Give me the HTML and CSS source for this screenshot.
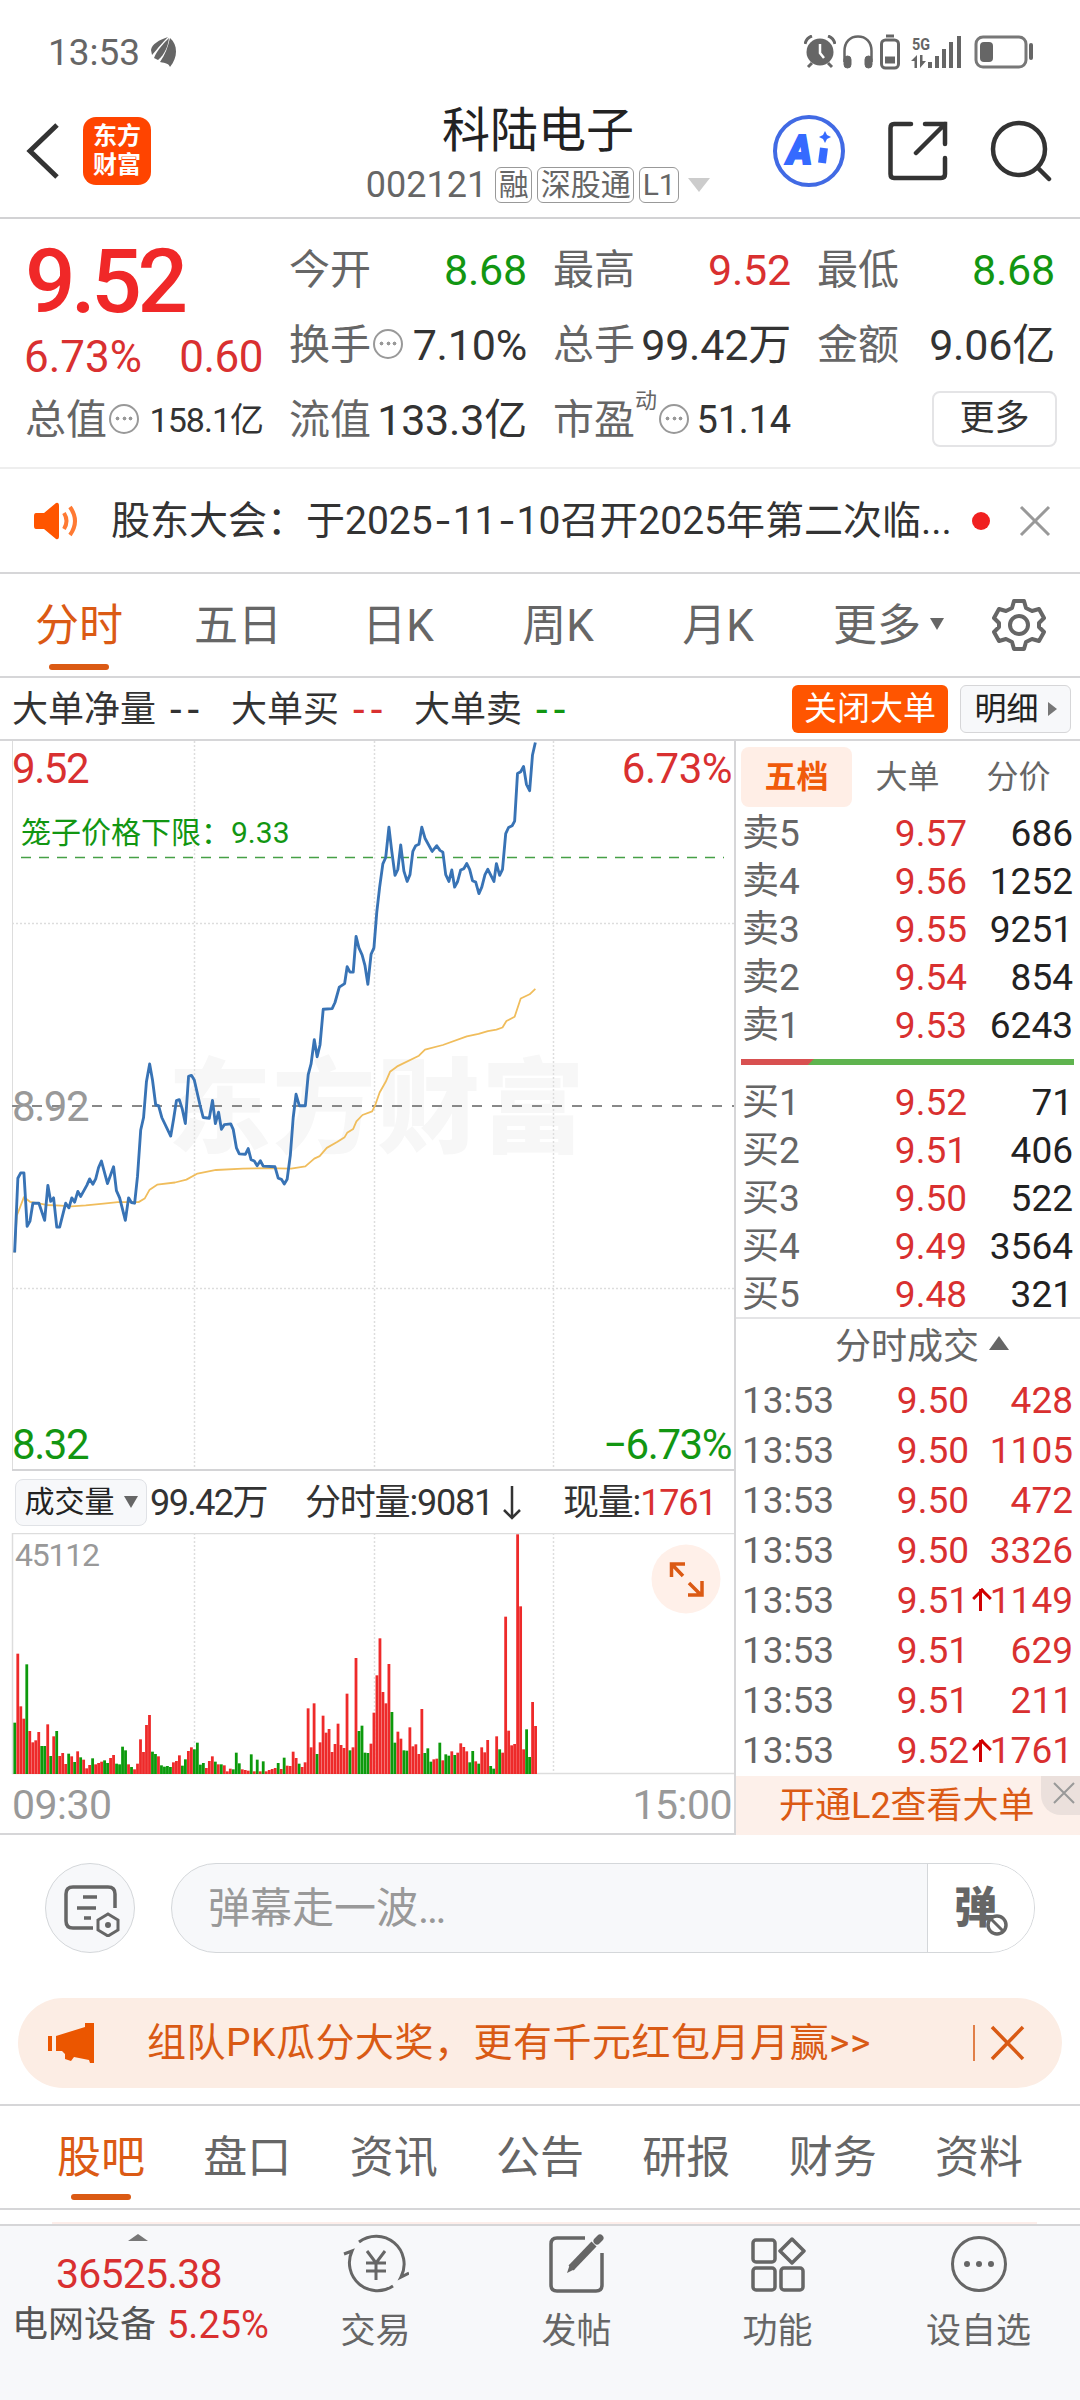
FILE: index.html
```
<!DOCTYPE html>
<html lang="zh-CN">
<head>
    <meta charset="UTF-8">
    <meta name="viewport" content="width=device-width, initial-scale=1.0">
    <title>科陆电子 002121</title>
    <link rel="stylesheet" href="styles.css">
</head>
<body>
    <div class="status-bar">
        <span class="time">13:53</span>
        <svg class="leaf" width="26" height="30" viewBox="0 0 26 30" fill="#666"><path d="M0 13C1 7 8 3 17 0C11 6 8 10 1 18Z"/><path d="M3 21C6 13 13 6 18 1C17 9 14 17 7 23Z"/><path d="M9 25C14 18 17 10 19 1C27 8 27 20 19 30C18 27 15 26 9 25Z"/></svg>
        <div class="status-icons">
            <svg width="32" height="34" viewBox="0 0 32 34" fill="none" stroke="#666"><circle cx="16" cy="17" r="13.5" fill="#666" stroke="none"/><path d="M1 9C2 4 5 2 8 1M31 9C30 4 27 2 24 1M8 28L4 32M24 28L28 32" stroke-width="3"/><path d="M16 9V18L20 23" stroke="#fff" stroke-width="2.5"/></svg>
            <svg width="32" height="36" viewBox="0 0 32 36" fill="none" stroke="#666"><path d="M2.500 28V17C2.500 8 8 2.500 16 2.500S29.500 8 29.500 17V28" stroke-width="2.500"/><rect x="2" y="22" width="7" height="12" rx="3.500" fill="#666"/><rect x="23" y="22" width="7" height="12" rx="3.500" fill="#666"/></svg>
            <svg width="20" height="36" viewBox="0 0 20 36" fill="none" stroke="#666"><rect x="1.500" y="6" width="17" height="28" rx="4" stroke-width="3"/><path d="M6 2H14" stroke-width="3"/><path d="M5 26H15" stroke-width="7"/></svg>
            <svg class="signal" width="52" height="34" viewBox="0 0 52 34" fill="#666"><text x="1" y="15" font-size="17" font-weight="700" textLength="18" lengthAdjust="spacingAndGlyphs">5G</text><path d="M6 20V33H3.500V26H0ZM9 20V33L15 26L11.500 26V20Z"/><path d="M17 27h4v6h-4zM24 21h4v12h-4zM31 14h4v19h-4zM38 7h4v26h-4zM46 1h4v32h-4z"/></svg>
            <svg width="60" height="34" viewBox="0 0 60 34"><rect x="2" y="2" width="50" height="30" rx="7" fill="none" stroke="#777" stroke-width="3"/><rect x="6" y="7" width="13" height="20" rx="4" fill="#666"/><rect x="55" y="8" width="4" height="17" rx="2" fill="#666"/></svg>
        </div>
    </div>

    <div class="header">
        <svg class="back" width="34" height="58" viewBox="0 0 34 58" fill="none" stroke="#333" stroke-width="5"><path d="M32 3L5 29L32 55"/></svg>
        <div class="logo"><span>东方</span><span>财富</span></div>
        <div class="title">
            <div class="stock-name">科陆电子</div>
            <div class="stock-code"><span>002121</span><i>融</i><i>深股通</i><i>L1</i><b class="tri-down big"></b></div>
        </div>
        <div class="header-icons">
            <svg width="74" height="74" viewBox="0 0 74 74"><circle cx="37" cy="37" r="34" fill="#fff" stroke="#416ae4" stroke-width="4"/><text x="15" y="50" font-size="40" font-weight="900" font-style="italic" fill="#356aff" stroke="#356aff" stroke-width="2" textLength="25" lengthAdjust="spacingAndGlyphs">A</text><path d="M52 34L50 49" stroke="#356aff" stroke-width="8"/><path d="M53 17L55 21L59 23L55 25L53 29L51 25L47 23L51 21Z" fill="#356aff"/></svg>
            <svg width="60" height="60" viewBox="0 0 60 60" fill="none" stroke="#333" stroke-width="4.500" stroke-linecap="round"><path d="M23 3H6Q2.500 3 2.500 7V53Q2.500 57 6 57H53Q57 57 57 53V37M37 3H57V23M57 3L28 32"/></svg>
            <svg width="62" height="62" viewBox="0 0 62 62" fill="none" stroke="#333" stroke-width="4.500" stroke-linecap="round"><circle cx="29" cy="29" r="26"/><path d="M48 48L59 59"/></svg>
        </div>
    </div>

    <div class="quote">
        <div class="price-box">
            <div class="price">9.52</div>
            <div class="change"><span>6.73%</span><span>0.60</span></div>
        </div>
        <div class="item"><label>今开</label><span class="green">8.68</span></div>
        <div class="item"><label>最高</label><span class="red">9.52</span></div>
        <div class="item"><label>最低</label><span class="green">8.68</span></div>
        <div class="item"><label>换手</label><em class="dots"></em><span>7.10%</span></div>
        <div class="item"><label>总手</label><span>99.42万</span></div>
        <div class="item"><label>金额</label><span>9.06亿</span></div>
        <div class="item"><label>总值</label><em class="dots"></em><span class="small">158.1亿</span></div>
        <div class="item"><label>流值</label><span>133.3亿</span></div>
        <div class="item"><label>市盈</label><sup>动</sup><em class="dots"></em><span class="mid">51.14</span></div>
        <div class="item"><button class="more-btn">更多</button></div>
    </div>

    <div class="notice">
        <svg width="46" height="38" viewBox="0 0 46 38"><path d="M3 11H11L23 1Q26 0 26 4V34Q26 38 23 37L11 27H3Q1 27 1 24V14Q1 11 3 11Z" fill="#ff5500"/><path d="M31 11Q36 19 31 27M37 5Q47 19 37 33" fill="none" stroke="#ff7a33" stroke-width="4"/></svg>
        <span class="notice-text">股东大会：于2025<u>-</u>11<u>-</u>10召开2025年第二次临...</span>
        <span class="red-dot"></span>
        <svg width="32" height="32" viewBox="0 0 32 32" stroke="#999" stroke-width="3"><path d="M2 2L30 30M30 2L2 30"/></svg>
    </div>

    <div class="period-tabs">
        <span><em class="active">分时</em></span>
        <span>五日</span>
        <span>日K</span>
        <span>周K</span>
        <span>月K</span>
        <span class="has-more">更多<b class="tri-down"></b></span>
        <svg width="54" height="54" viewBox="0 0 54 54" fill="none" stroke="#666" stroke-width="4"><path d="M22 3H32L34 10L40 13L47 11L52 20L47 25V29L52 34L47 43L40 41L34 44L32 51H22L20 44L14 41L7 43L2 34L7 29V25L2 20L7 11L14 13L20 10Z" stroke-linejoin="round"/><circle cx="27" cy="27" r="9"/></svg>
    </div>

    <div class="big-order">
        <span>大单净量</span><span class="dash">--</span>
        <span>大单买</span><span class="dash red">--</span>
        <span>大单卖</span><span class="dash green">--</span>
        <button class="btn-close-order">关闭大单</button>
        <button class="btn-detail">明细<b class="tri-right"></b></button>
    </div>

    <div class="main">
        <div class="chart-col">
            <svg class="price-chart" width="734" height="730" viewBox="0 0 734 730">
                <text class="watermark" x="168" y="404">东方财富</text>
                <g class="grid">
                    <path d="M194.500 0V730M374.500 0V730M553.500 0V730M12 182.500H734M12 547.500H734"/>
                </g>
                <path d="M12.500 0V730" stroke="#ddd"/>
                <path d="M12 729H734" stroke="#d4d4d6" stroke-width="2"/>
                <path d="M12 365H734" stroke="#888" stroke-width="2" stroke-dasharray="10 10"/>
                <path d="M21 116.500H724" stroke="#46a046" stroke-width="1.500" stroke-dasharray="10 8"/>
                <text class="label red" x="12" y="42" textLength="77">9.52</text>
                <text class="label red" x="732" y="42" text-anchor="end">6.73%</text>
                <text class="label grey" x="12" y="380" textLength="77">8.92</text>
                <text class="label green" x="12" y="718" textLength="77">8.32</text>
                <text class="label green" x="603" y="718" textLength="129">−6.73%</text>
                <text class="cage green" x="21" y="102">笼子价格下限：9.33</text>
                <g transform="translate(0 -11) scale(.35714)" fill="none" stroke-linejoin="round">
                    <polyline stroke="#f0bd5c" stroke-width="5" points="41,1463 47,1360 67,1308 84,1321 105,1325 130,1330 170,1332 200,1334 240,1331 290,1326 330,1322 388,1322 405,1312 419,1287 440,1273 490,1267 522,1259 553,1242 605,1232 680,1228 740,1227 815,1228 855,1222 880,1200 895,1193 915,1170 945,1153 965,1140 972,1128 989,1117 998,1096 1015,1078 1042,1068 1050,1052 1063,1015 1080,985 1092,957 1112,942 1173,912 1190,895 1240,882 1307,858 1340,851 1366,843 1390,839 1407,833 1418,815 1441,803 1458,752 1483,740 1499,725"/>
                    <polyline stroke="#3873b5" stroke-width="8" points="41,1463 50,1255 58,1240 67,1240 76,1390 84,1375 92,1325 109,1325 125,1373 134,1275 142,1320 150,1310 159,1392 167,1392 184,1325 193,1338 201,1310 209,1322 218,1292 226,1306 243,1275 251,1257 260,1272 268,1257 276,1225 284,1207 301,1270 318,1223 326,1290 335,1310 351,1373 360,1310 368,1323 377,1325 385,1250 394,1120 402,1085 410,985 419,935 427,980 436,1050 444,1052 453,1085 478,1137 486,1090 494,1038 502,1035 510,1060 519,1102 528,970 536,967 544,980 560,1050 569,1085 586,1087 595,1037 603,1102 612,1070 620,1118 628,1105 646,1103 653,1118 662,1170 670,1187 687,1188 695,1172 703,1203 712,1207 720,1220 729,1206 737,1221 770,1223 779,1255 788,1258 796,1271 804,1258 813,1190 821,1085 829,1020 838,1052 855,1052 863,965 871,935 880,867 888,915 896,882 905,782 930,780 938,763 950,720 965,710 972,663 980,678 989,678 997,578 1005,610 1014,630 1022,660 1030,712 1039,628 1047,610 1055,510 1063,440 1072,375 1080,357 1089,272 1097,340 1106,407 1114,390 1122,322 1131,395 1140,424 1148,405 1156,340 1164,324 1173,320 1181,272 1190,303 1210,340 1223,324 1232,337 1240,342 1248,405 1257,424 1265,392 1273,440 1281,425 1290,392 1299,388 1307,374 1315,390 1323,422 1332,426 1341,458 1349,440 1358,405 1366,390 1383,424 1390,374 1399,407 1407,390 1416,290 1424,273 1434,268 1441,255 1449,122 1458,117 1466,102 1474,152 1483,170 1491,70 1499,35"/>
                </g>
            </svg>
            <div class="volume-bar">
                <button class="btn-volume">成交量<b class="tri-down"></b></button>
                <span class="v-total">99.42万</span>
                <span class="v-minute">分时量:9081<svg width="18" height="36" viewBox="0 0 18 36" fill="none" stroke="#333" stroke-width="2.500"><path d="M9 1V33M1 25L9 33L17 25"/></svg></span>
                <span class="v-now">现量:<span class="red">1761</span></span>
            </div>
            <svg class="volume-chart" width="734" height="242" viewBox="0 0 734 242">
                <path class="grid" d="M194.500 0V241M374.500 0V241M553.500 0V241"/>
                <path d="M734 .5H12.500V240.500H734" fill="none" stroke="#ddd" stroke-width="1.500"/>
                <text class="max" x="15" y="33" textLength="85">45112</text>
                <g id="bars"></g>
                <circle cx="686" cy="46" r="34.500" fill="#fff0e9"/>
                <path d="M671.500 44V31H685M673 32.500L683 43M689 50L701 62M702 48V62H688" fill="none" stroke="#db5a14" stroke-width="3.500"/>
            </svg>
            <div class="time-axis"><span>09:30</span><span>15:00</span></div>
        </div>

        <div class="side-col">
            <div class="side-tabs"><span class="active">五档</span><span>大单</span><span>分价</span></div>
            <div class="book">
                <div class="row"><span>卖5</span><b>9.57</b><i>686</i></div>
                <div class="row"><span>卖4</span><b>9.56</b><i>1252</i></div>
                <div class="row"><span>卖3</span><b>9.55</b><i>9251</i></div>
                <div class="row"><span>卖2</span><b>9.54</b><i>854</i></div>
                <div class="row"><span>卖1</span><b>9.53</b><i>6243</i></div>
            </div>
            <div class="ratio"></div>
            <div class="book">
                <div class="row"><span>买1</span><b>9.52</b><i>71</i></div>
                <div class="row"><span>买2</span><b>9.51</b><i>406</i></div>
                <div class="row"><span>买3</span><b>9.50</b><i>522</i></div>
                <div class="row"><span>买4</span><b>9.49</b><i>3564</i></div>
                <div class="row"><span>买5</span><b>9.48</b><i>321</i></div>
            </div>
            <div class="ticks-title">分时成交<b class="tri-up"></b></div>
            <div class="ticks">
                <div class="row"><span>13:53</span><b>9.50</b><i>428</i></div>
                <div class="row"><span>13:53</span><b>9.50</b><i>1105</i></div>
                <div class="row"><span>13:53</span><b>9.50</b><i>472</i></div>
                <div class="row"><span>13:53</span><b>9.50</b><i>3326</i></div>
                <div class="row up"><span>13:53</span><b>9.51</b><i>1149</i></div>
                <div class="row"><span>13:53</span><b>9.51</b><i>629</i></div>
                <div class="row"><span>13:53</span><b>9.51</b><i>211</i></div>
                <div class="row up"><span>13:53</span><b>9.52</b><i>1761</i></div>
            </div>
            <div class="l2-ad">开通L2查看大单
                <div class="l2-close"><svg width="22" height="22" viewBox="0 0 22 22" stroke="#999" stroke-width="2"><path d="M1 1L21 21M21 1L1 21"/></svg></div>
            </div>
        </div>
    </div>

    <div class="danmu">
        <div class="danmu-set">
            <svg width="56" height="52" viewBox="0 0 56 52" fill="none" stroke="#666" stroke-width="3.500"><path d="M29 43H9Q2 43 2 36V9Q2 2 9 2H44Q51 2 51 9V23M19 12H33M13 23H32M20 33H27"/><path d="M44 29L54 35V45L44 51L34 45V35Z" stroke-width="3"/><circle cx="44" cy="40" r="3" fill="#666" stroke="none"/></svg>
        </div>
        <div class="danmu-input">
            <span>弹幕走一波…</span>
            <div class="danmu-switch">弹
                <svg width="22" height="22" viewBox="0 0 22 22"><circle cx="11" cy="11" r="9" fill="#fff" stroke="#666" stroke-width="3.500"/><path d="M5 5L17 17" stroke="#666" stroke-width="3"/></svg>
            </div>
        </div>
    </div>

    <div class="promo">
        <svg width="46" height="40" viewBox="0 0 46 40" fill="#eb5600"><path d="M0 13h4v15H0zM8 13L37 4V0H46V40H42L41 37L26 34L23 38L17 36V31L14 28H8Z"/></svg>
        <span class="promo-text">组队PK瓜分大奖，更有千元红包月月赢&gt;&gt;</span>
        <svg class="promo-close" width="52" height="36" viewBox="0 0 52 36" fill="none" stroke="#d95a14"><path d="M1 0V36" stroke-width="1.500"/><path d="M19 2L50 34M50 2L19 34" stroke-width="3.500"/></svg>
    </div>

    <div class="info-tabs">
        <span class="active">股吧</span><span>盘口</span><span>资讯</span><span>公告</span><span>研报</span><span>财务</span><span>资料</span>
    </div>
    <div class="feed-peek"></div>

    <div class="bottom-nav">
        <div class="sector">
            <b class="tri-up"></b>
            <div class="sector-index">36525.38</div>
            <div class="sector-name">电网设备<span>5.25%</span></div>
        </div>
        <div class="nav-item">
            <svg width="66" height="60" viewBox="0 0 66 60" fill="none" stroke="#666" stroke-width="3"><path d="M16 8A28 28 0 0 1 58 43L66 39M50 52A28 28 0 0 1 9 17L1 20M24 17L33 29L42 17M33 29V46M23 29H43M23 37H43"/></svg>
            <span>交易</span>
        </div>
        <div class="nav-item">
            <svg width="56" height="60" viewBox="0 0 56 60" fill="none" stroke="#666" stroke-width="3.500"><path d="M36 4H8Q2 4 2 10V51Q2 57 8 57H47Q53 57 53 51V19"/><path d="M22 34L45 10" stroke-width="7"/><path d="M18 39L21 30L26 35Z" fill="#666" stroke="none"/><path d="M48 7L51 4" stroke-width="7" stroke-linecap="round"/></svg>
            <span>发帖</span>
        </div>
        <div class="nav-item">
            <svg width="56" height="60" viewBox="0 0 56 60" fill="none" stroke="#666" stroke-width="3.500"><rect x="3" y="6" width="22" height="22" rx="3"/><rect x="3" y="34" width="22" height="22" rx="3"/><rect x="31" y="34" width="22" height="22" rx="3"/><path d="M42 5L54 17L42 29L30 17Z" stroke-linejoin="round"/></svg>
            <span>功能</span>
        </div>
        <div class="nav-item">
            <svg width="60" height="60" viewBox="0 0 60 60"><circle cx="30" cy="30" r="26.500" fill="none" stroke="#666" stroke-width="3"/><g fill="#666"><circle cx="18" cy="30" r="3"/><circle cx="30" cy="30" r="3"/><circle cx="42" cy="30" r="3"/></g></svg>
            <span>设自选</span>
        </div>
    </div>

    <script src="chart.js"></script>
</body>
</html>
```
FILE: styles.css
```
* {
    box-sizing: border-box;
}

body {
    margin: 0;
    width: 1080px;
    height: 2400px;
    overflow: hidden;
    background: #fff;
    color: #333;
    font-family: Roboto, "Noto Sans CJK SC", sans-serif;
    line-height: 1;
    white-space: nowrap;
}

i, em {
    font-style: normal;
}

button {
    display: flex;
    align-items: center;
    justify-content: center;
    padding: 0;
    font-family: inherit;
    line-height: 1;
}

svg {
    display: block;
    flex: none;
}

.red { color: #d93030; fill: #d93030; }
.green { color: #129612; fill: #129612; }
.grey { fill: #999; }

/* small triangles */
.tri-down, .tri-up, .tri-right {
    display: inline-block;
    width: 0;
    height: 0;
    border: 7px solid transparent;
}
.tri-down { border-top: 12px solid #666; border-bottom: 0; }
.tri-down.big { border-width: 14px 11px 0; border-top-color: #ccc; }
.tri-up { border-bottom: 14px solid #666; border-top: 0; border-left-width: 10px; border-right-width: 10px; }
.tri-right { border-left: 9px solid #777; border-right: 0; }

/* status bar */
.status-bar {
    display: flex;
    align-items: center;
    height: 104px;
    padding: 0 46px 0 48px;
    color: #666;
}
.time { font-size: 37px; }
.leaf { margin-left: 11px; }
.status-icons {
    display: flex;
    align-items: center;
    gap: 6px;
    margin-left: auto;
}
.signal { margin-left: 5px; margin-right: 5px; }

/* header */
.header {
    display: flex;
    align-items: center;
    height: 115px;
    padding: 0 28px 20px 25px;
    border-bottom: 2px solid #d2d2d4;
}
.logo {
    display: flex;
    flex-direction: column;
    justify-content: center;
    align-items: center;
    width: 68px;
    height: 68px;
    margin-left: 24px;
    border-radius: 13px;
    background: #ff4400;
    color: #fff;
    font-size: 24px;
    font-weight: 700;
    line-height: 29px;
}
.title {
    display: flex;
    flex-direction: column;
    align-items: center;
    width: 360px;
    margin-left: 207px;
    padding-top: 5px;
}
.stock-name {
    font-size: 48px;
    line-height: 56px;
    color: #222;
}
.stock-code {
    display: flex;
    align-items: center;
    gap: 5px;
    height: 38px;
    margin-top: 7px;
    font-size: 36px;
    color: #666;
}
.stock-code i {
    height: 36px;
    padding: 0 2.500px;
    border: 1.500px solid #999;
    border-radius: 6px;
    font-size: 30px;
    line-height: 33px;
}
.stock-code span { margin-right: 3px; }
.stock-code .big { margin-left: 4px; }
.header-icons {
    display: flex;
    align-items: center;
    gap: 42px;
    margin-left: auto;
}

/* quote */
.quote {
    display: grid;
    grid-template-columns: repeat(4, 1fr);
    grid-template-rows: repeat(3, 75px);
    column-gap: 26px;
    height: 250px;
    padding: 13px 25px 0;
    border-bottom: 2px solid #eee;
}
.price-box { grid-row: span 2; }
.price {
    height: 98px;
    font-size: 89px;
    font-weight: 500;
    line-height: 100px;
    letter-spacing: -4.500px;
    color: #f02828;
}
.change {
    display: flex;
    justify-content: space-between;
    margin-left: -1px;
    font-size: 44px;
    line-height: 54px;
    color: #d93030;
}
.change span + span { letter-spacing: -.500px; }
.item {
    display: flex;
    align-items: center;
    font-size: 43px;
}
.item label {
    margin-top: 2px;
    font-size: 41px;
    color: #666;
}
.item > span {
    margin-top: 1px;
    margin-left: auto;
    letter-spacing: -.200px;
}
.item .small { font-size: 34px; letter-spacing: -1px; }
.item .mid { font-size: 38px; }
.item sup {
    align-self: flex-start;
    margin-top: 8px;
    font-size: 22px;
    color: #666;
}
.dots {
    width: 30px;
    height: 30px;
    margin-left: 2px;
    margin-top: -2px;
    border: 2.500px solid #999;
    border-radius: 50%;
    background: radial-gradient(circle, #999 1.700px, transparent 2.200px) 50% 50% / 7px 7px no-repeat,
        radial-gradient(circle, #999 1.700px, transparent 2.200px) 4px 50% / 5px 7px no-repeat,
        radial-gradient(circle, #999 1.700px, transparent 2.200px) 17px 50% / 5px 7px no-repeat;
}
.more-btn {
    width: 125px;
    height: 56px;
    margin: -2px -2px 0 auto;
    border: 2px solid #e4e4e6;
    border-radius: 8px;
    background: #fff;
    font-size: 35px;
    color: #333;
}

/* notice */
.notice {
    display: flex;
    align-items: center;
    height: 105px;
    padding: 0 29px 0 33px;
    border-bottom: 2px solid #d6d6d8;
}
.notice-text {
    width: 845px;
    margin-left: 32px;
    padding-top: 2px;
    font-size: 39px;
}
.notice-text u {
    display: inline-block;
    width: 20px;
    text-align: center;
    text-decoration: none;
    transform: scaleX(1.300);
}
.red-dot {
    width: 18px;
    height: 18px;
    margin: 0 auto 0 16px;
    border-radius: 50%;
    background: #f02020;
}

/* period tabs */
.period-tabs {
    display: flex;
    align-items: center;
    height: 104px;
    border-bottom: 2px solid #d6d6d8;
    font-size: 44px;
    color: #666;
}
.period-tabs > span {
    width: 160px;
    padding-top: 2px;
    text-align: center;
}
.period-tabs > span:first-child {
    width: 158px;
}
.period-tabs .has-more {
    display: flex;
    align-items: center;
    justify-content: flex-end;
    gap: 9px;
    width: 146px;
}
.period-tabs svg { margin-left: 48px; }
.period-tabs .tri-down { margin-top: -4px; }
.active { position: relative; }
.period-tabs .active, .info-tabs .active { color: #db5a14; }
.period-tabs .active::after, .info-tabs .active::after {
    content: "";
    position: absolute;
    left: calc(50% - 30px);
    bottom: -20px;
    width: 60px;
    height: 6px;
    border-radius: 3px;
    background: #db5a14;
}
.period-tabs .active::after { bottom: -18px; }

/* big order line */
.big-order {
    display: flex;
    align-items: center;
    height: 63px;
    padding: 0 9px 0 12px;
    border-bottom: 2px solid #d6d6d8;
    font-size: 36px;
}
.big-order > span { padding-top: 3px; }
.big-order .dash {
    width: 36px;
    margin: 0 25px 0 14px;
    font-size: 42px;
    letter-spacing: 6px;
}
.btn-close-order, .btn-detail {
    height: 48px;
    border: 0;
    border-radius: 6px;
    font-size: 33px;
}
.btn-close-order {
    width: 156px;
    margin-left: auto;
    background: #ff5500;
    color: #fff;
}
.btn-detail {
    gap: 9px;
    width: 111px;
    margin-left: 12px;
    border: 1.500px solid #d6d6d8;
    background: #f7f8fa;
    font-size: 32px;
    color: #222;
}

/* chart */
.main {
    display: flex;
    height: 1094px;
    border-bottom: 2px solid #d6d6d8;
}
.chart-col {
    width: 736px;
    border-right: 2px solid #d6d6d8;
}
.grid {
    fill: none;
    stroke: #ddd;
    stroke-width: 1.500px;
    stroke-dasharray: 2 2;
}
.watermark {
    font-size: 103px;
    font-weight: 900;
    letter-spacing: 1.500px;
    fill: #f7f7f7;
}
.label { font-size: 42px; letter-spacing: -.500px; }
.cage { font-size: 30px; }
.volume-bar {
    display: flex;
    align-items: center;
    height: 62px;
    padding-left: 15px;
    font-size: 36px;
    letter-spacing: -1.200px;
}
.volume-bar > span { padding-top: 1px; }
.btn-volume {
    gap: 9px;
    width: 132px;
    height: 47px;
    border: 1.500px solid #e0e2e6;
    border-radius: 8px;
    background: #f7f8fa;
    font-size: 30px;
    color: #222;
}
.volume-bar .v-total {
    width: 158px;
    padding-left: 3px;
    letter-spacing: -1.600px;
}
.v-minute {
    display: flex;
    align-items: center;
    gap: 10px;
    width: 258px;
}
.volume-chart .max {
    font-size: 32px;
    fill: #999;
}
.volume-chart .rise { fill: #ee2a2a; }
.volume-chart .fall { fill: #0c9a0c; }
.time-axis {
    display: flex;
    justify-content: space-between;
    padding: 10px 2px 0 12px;
    font-size: 41px;
    letter-spacing: -.500px;
    color: #999;
}

/* order book */
.side-col {
    flex: 1;
}
.side-tabs {
    display: flex;
    height: 68px;
    padding: 6px 4px 0 5px;
    font-size: 32px;
    line-height: 60px;
    color: #666;
}
.side-tabs span {
    width: 111px;
    text-align: center;
}
.side-tabs .active {
    height: 60px;
    border-radius: 8px;
    background: #ffeee6;
    color: #f05a0a;
    font-weight: 700;
}
.row {
    display: flex;
    align-items: center;
    height: 48px;
    padding: 0 7px 0 6px;
    font-size: 37px;
    color: #666;
}
.row span { width: 120px; }
.row b {
    width: 105px;
    text-align: right;
    font-weight: 400;
    color: #d93030;
}
.row i {
    flex: 1;
    text-align: right;
    color: #222;
}
.ratio {
    height: 6px;
    margin: 10px 6px 13px 5px;
    background: linear-gradient(135deg, #d85050 51px, #5fb44f 52px);
}
.ticks-title {
    display: flex;
    align-items: center;
    justify-content: center;
    gap: 10px;
    height: 58px;
    margin-top: -1px;
    border-top: 2px solid #e4e4e6;
    padding-left: 28px;
    font-size: 36px;
    color: #666;
}
.ticks-title .tri-up { margin-top: -8px; }
.ticks .row {
    position: relative;
    height: 50.100px;
    padding-left: 6px;
}
.ticks .row b { width: 107px; }
.ticks .row i { color: #d93030; }
.up::before, .up::after {
    content: "";
    position: absolute;
}
.up::before {
    left: 243px;
    top: 14px;
    width: 3px;
    height: 22px;
    background: #d00000;
}
.up::after {
    left: 239px;
    top: 16px;
    width: 11px;
    height: 11px;
    border: solid #d00000;
    border-width: 3px 0 0 3px;
    transform: rotate(45deg);
}
.l2-ad {
    position: relative;
    height: 59px;
    padding-left: 43px;
    background: #fdf0ea;
    font-size: 36px;
    line-height: 61px;
    color: #db5a14;
}
.l2-close {
    position: absolute;
    right: 0;
    top: 0;
    width: 39px;
    height: 39px;
    padding: 6px 0 0 12px;
    border-radius: 0 0 0 20px;
    background: #ebe0dc;
}

/* danmu input */
.danmu {
    display: flex;
    height: 163px;
    padding: 28px 45px 0;
}
.danmu-set {
    display: flex;
    align-items: center;
    justify-content: center;
    width: 90px;
    height: 90px;
    border: 1.500px solid #d4d7da;
    border-radius: 50%;
    background: #f7f8fa;
}
.danmu-set svg { margin: 6px 0 0 3px; }
.danmu-input {
    display: flex;
    align-items: center;
    justify-content: space-between;
    width: 864px;
    height: 90px;
    margin-left: 36px;
    padding-left: 36px;
    border: 1.500px solid #d4d7da;
    border-radius: 45px;
    background: #f7f8fa;
    overflow: hidden;
    font-size: 42px;
    color: #999;
}
.danmu-input > span { padding-top: 2px; }
.danmu-switch {
    position: relative;
    width: 107px;
    height: 88px;
    padding-left: 26px;
    border-left: 1.500px solid #d4d7da;
    background: #fff;
    font-size: 43px;
    font-weight: 900;
    line-height: 88px;
    color: #666;
}
.danmu-switch svg {
    position: absolute;
    left: 58px;
    top: 50px;
}

/* promo */
.promo {
    display: flex;
    align-items: center;
    height: 90px;
    margin: 0 18px 16px;
    padding: 0 37px 0 30px;
    border-radius: 45px;
    background: #fcede4;
    font-size: 39px;
    letter-spacing: .500px;
    color: #d95a14;
}
.promo-text { margin-left: 53px; }
.promo-close { margin-left: auto; }

/* info tabs */
.info-tabs {
    display: flex;
    align-items: center;
    justify-content: space-between;
    height: 106px;
    padding: 2px 57px 0;
    border-top: 2px solid #d6d6d8;
    border-bottom: 2px solid #d6d6d8;
    font-size: 44px;
    color: #666;
}
.feed-peek {
    height: 14px;
    background: linear-gradient(#fdeeea, #fdeeea) 52px 12px / 985px 2px no-repeat;
}

/* bottom nav */
.bottom-nav {
    display: flex;
    height: 176px;
    border-top: 2px solid #d6d6d8;
    background: #f7f8fa;
}
.sector {
    width: 275px;
    padding: 8px 0 0 12px;
}
.sector .tri-up {
    display: block;
    width: 0;
    margin-left: 116px;
    border-bottom: 7px solid #777;
}
.sector-index {
    margin: 13px 0 11px 44px;
    font-size: 41px;
    letter-spacing: -.800px;
    color: #d93030;
}
.sector-name {
    display: flex;
    align-items: center;
    gap: 11px;
    font-size: 36px;
    color: #555;
}
.sector-name span {
    font-size: 38px;
    color: #d93030;
}
.nav-item {
    display: flex;
    flex-direction: column;
    align-items: center;
    gap: 20px;
    width: 201px;
    padding-top: 8px;
    font-size: 35px;
    color: #666;
}
```
FILE: chart.js
```
// minute volume, negative = price went down in that minute
const volumes = [
    -154, 361, 203, 166, -329, 129, 95, 101, 126, -84, -84, 149, -54, 113, -129, 54, 63, 30, -61, 53,
    -36, 68, -50, 43, 17, 27, -47, 29, 33, 37, -41, -33, 48, 57, -31, -29, -82, -71, 29, -21,
    14, 31, 104, 66, 147, 177, -67, -60, 53, -26, -22, -24, -21, 35, 39, 56, -25, -44, 69, 80,
    -74, -94, -28, -33, 18, 39, 53, -37, 29, -29, 26, 8, 16, -14, -64, -32, 14, 12, 10, -59,
    8, -43, 8, -38, 8, 12, 15, 18, -33, 15, -49, 25, 24, 67, 48, -31, 21, 35, 197, 80,
    212, -60, 95, 175, 124, 135, 66, 90, 151, 87, 78, 241, -71, 80, 348, -129, -145, -64, -63, 91,
    184, 296, 407, 246, 212, 330, -186, -94, 127, 106, -71, -70, 140, 83, 89, 60, 195, -63, -77, -37,
    44, 46, -94, 41, -59, -55, 68, -57, 64, 92, 81, 68, -35, -69, 38, -31, 80, 65, 102, -24,
    -16, 113, -74, 64, 472, 130, 86, 90, 719, 503, 74, -134, -51, 216, 144
];

const bars = document.getElementById('bars');
volumes.forEach((v, i) => {
    const h = Math.abs(v) / 3;
    const rect = document.createElementNS('http://www.w3.org/2000/svg', 'rect');
    rect.setAttribute('class', v > 0 ? 'rise' : 'fall');
    rect.setAttribute('x', (13.4 + i * 2.993).toFixed(2));
    rect.setAttribute('y', (241 - h).toFixed(2));
    rect.setAttribute('width', 2.8);
    rect.setAttribute('height', h.toFixed(2));
    bars.appendChild(rect);
});
```
